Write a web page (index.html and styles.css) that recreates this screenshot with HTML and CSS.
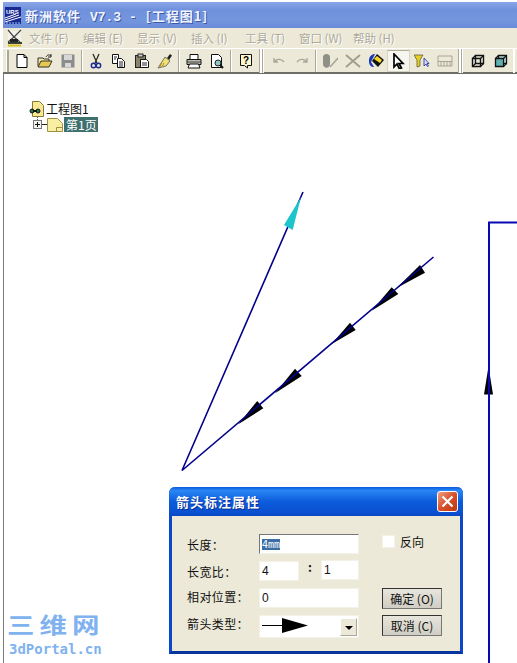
FILE: index.html
```html
<!DOCTYPE html>
<html lang="zh-CN">
<head>
  <meta charset="UTF-8">
  <title>新洲软件 V7.3</title>
  <link rel="stylesheet" href="styles.css">
</head>
<body>
  <div class="window">
    <div class="titlebar">
      <svg class="app-icon" width="16" height="17" viewBox="0 0 16 17">
        <rect width="16" height="17" fill="#1a2a90"/>
        <path d="M0 11 L11 7 M0 13 L14 8 M0 15 L16 10" stroke="#fff" stroke-width="1"/>
        <path d="M1 16h14" stroke="#9cf" stroke-dasharray="2 1"/>
        <text x="1" y="6.500" class="app-icon-text">URS</text>
      </svg>
      <span class="title-text">新洲软件 <span class="mono">V7.3 -</span> [工程图1]</span>
    </div>

    <div class="menubar">
      <svg class="menu-icon" width="16" height="19" viewBox="0 0 16 19">
        <path d="M1 2h13v11H1z" fill="#f4f2e8"/>
        <path d="M1 1 L7 8 L1 13 M14 1 L7 8 M7 8 L13 13" stroke="#444" stroke-width="1.200" fill="none"/>
        <path d="M3 10h8v3H3z" fill="#222"/>
        <path d="M1 14h14" stroke="#111" stroke-width="1.600"/>
        <path d="M1 16.500h13" stroke="#d8c020" stroke-width="2"/>
      </svg>
      <span class="menu-item">文件 (F)</span>
      <span class="menu-item">编辑 (E)</span>
      <span class="menu-item">显示 (V)</span>
      <span class="menu-item">插入 (I)</span>
      <span class="menu-item">工具 (T)</span>
      <span class="menu-item">窗口 (W)</span>
      <span class="menu-item">帮助 (H)</span>
    </div>

    <div class="toolbar">
      <span class="grip-first"></span>
      <span class="tool"><svg viewBox="0 0 16 16"><path d="M3 1.500h7l3 3v10H3z" fill="#fff" stroke="#000"/><path d="M10 1.500v3h3" fill="none" stroke="#000"/></svg></span>
      <span class="tool"><svg viewBox="0 0 16 16"><path d="M1 13V5h5l1 1h5v2" fill="#f4e8a0" stroke="#333"/><path d="M1 14l3-6h11l-3 6z" fill="#e8c850" stroke="#333"/><path d="M9 4c1-2 3-3 5-1M14 1v3h-3" fill="none" stroke="#222"/></svg></span>
      <span class="tool"><svg viewBox="0 0 16 16"><rect x="1.500" y="1.500" width="13" height="13" fill="#8c8c8c"/><rect x="4" y="2" width="8" height="5" fill="#d8d8d8"/><rect x="5" y="10" width="6" height="4" fill="#d8d8d8"/></svg></span>
      <span class="sep"></span>
      <span class="tool"><svg viewBox="0 0 16 16"><path d="M5 1l4 9M11 1L7 10" stroke="#222" stroke-width="1.200"/><circle cx="5.500" cy="12.500" r="2.200" fill="none" stroke="#1a2a90" stroke-width="1.400"/><circle cx="10.500" cy="12.500" r="2.200" fill="none" stroke="#1a2a90" stroke-width="1.400"/></svg></span>
      <span class="tool"><svg viewBox="0 0 16 16"><path d="M1.500 1.500h6v9h-6z" fill="#fff" stroke="#111"/><path d="M6.500 5.500h4l3 3v6h-7z" fill="#fff" stroke="#111"/><path d="M3 4h3M3 6h2M8 9h4M8 11h4M8 13h4" stroke="#223"/></svg></span>
      <span class="tool"><svg viewBox="0 0 16 16"><rect x="1.500" y="2.500" width="10" height="12" fill="#8a8468" stroke="#222"/><rect x="4" y="1" width="5" height="3" fill="#ccc" stroke="#222"/><path d="M6.500 6.500h6l2 2v6h-8z" fill="#fff" stroke="#111"/><path d="M8 10h5M8 12h5" stroke="#223"/></svg></span>
      <span class="tool"><svg viewBox="0 0 16 16"><path d="M10 5l3-4 2 1.500-3 4.500z" fill="#222"/><path d="M8 4l5 4-4 5-8 2z" fill="#f2e070" stroke="#555" stroke-width=".8"/><path d="M5 9l-2 5M7 10l-2 4" stroke="#a89030"/></svg></span>
      <span class="sep sep-wide"></span>
      <span class="tool"><svg viewBox="0 0 16 16"><path d="M4 6V1.500h8V6" fill="#fff" stroke="#111"/><path d="M1 6.500h14l0 5H1z" fill="#bdbdb0" stroke="#111"/><path d="M3.500 11h9l1.500 4H2z" fill="#fff" stroke="#111"/><path d="M1 9h14" stroke="#444"/></svg></span>
      <span class="tool"><svg viewBox="0 0 16 16"><path d="M2.500 1.500h7l3 3v10h-10z" fill="#fff" stroke="#111"/><circle cx="9" cy="10" r="3" fill="#8cc8c8" stroke="#222"/><path d="M11 12l3 3" stroke="#111" stroke-width="2"/></svg></span>
      <span class="sep sep-wide"></span>
      <span class="tool"><svg viewBox="0 0 16 16"><path d="M2.500 1.500h11v11h-4v2.500l-3-2.500h-4z" fill="#fff8d0" stroke="#111"/><text x="5" y="11" class="help-mark">?</text></svg></span>
      <span class="grip"></span>
      <span class="tool"><svg viewBox="0 0 16 16"><path d="M3 5v4h4M3 9c2-3 7-4 10 0" fill="none" stroke="#a8a498" stroke-width="1.300"/></svg></span>
      <span class="tool"><svg viewBox="0 0 16 16"><path d="M13 5v4H9M13 9C11 6 6 5 3 9" fill="none" stroke="#a8a498" stroke-width="1.300"/></svg></span>
      <span class="sep"></span>
      <span class="tool"><svg viewBox="0 0 16 16"><path d="M1 4c0-4 7-4 7 0v7c0 5-7 5-7 0z" fill="#8f8f88"/><path d="M8 14L16 5" stroke="#a8a498" stroke-width="1.500"/></svg></span>
      <span class="tool"><svg viewBox="0 0 16 16"><path d="M1 2l14 12M15 2L1 14" stroke="#a09c90" stroke-width="1.800"/></svg></span>
      <span class="tool"><svg viewBox="0 0 16 16"><path d="M1 8C1 3 4 1 7 1L3 9l3 5C3 14 1 12 1 8z" fill="#1838b8"/><path d="M9 1l7 6-6 7-6-6z" fill="#111"/><path d="M9 3l5 4-2 3-6-4z" fill="#f2d828"/></svg></span>
      <span class="tool tool-on"><svg viewBox="0 0 16 16"><path d="M3 1v13l3-3 2.500 5 2-1-2.500-4.500h4z" fill="#fff" stroke="#000" stroke-width="1.700"/></svg></span>
      <span class="tool"><svg viewBox="0 0 16 16"><path d="M0 2h9L6 7v6L3 14V7z" fill="#e8d020" stroke="#333" stroke-width=".6"/><path d="M10 5v8l2-2 1.500 2.500 1-.5-1.500-2.500h2z" fill="#d8e0ff" stroke="#1a2a90" stroke-width=".8"/></svg></span>
      <span class="tool"><svg viewBox="0 0 16 16"><path d="M1 3h14M1 13h14M1 8.500h14" stroke="#a8a498"/><path d="M1 3v10M15 3v10M4 8.500V13M7 8.500V13M10 8.500V13M13 8.500V13" stroke="#a8a498" fill="none"/></svg></span>
      <span class="grip"></span>
      <span class="tool"><svg viewBox="0 0 16 16"><path d="M5.500 2.500h8v8h-8zM2.500 5.500h8v8h-8z" fill="none" stroke="#111" stroke-width="1.400"/><path d="M2.500 5.500l3-3M10.500 5.500l3-3M10.500 13.500l3-3M2.500 13.500l3-3" stroke="#111" stroke-width="1.200"/></svg></span>
      <span class="tool"><svg viewBox="0 0 16 16"><path d="M5.500 2.500h8v8h-8z" fill="#b8d8d8" stroke="#111" stroke-width="1.300"/><path d="M2.500 5.500h8v8h-8z" fill="#60b0b0" stroke="#111" stroke-width="1.300"/><path d="M2.500 5.500l3-3M10.500 5.500l3-3M10.500 13.500l3-3" stroke="#111" stroke-width="1.200"/></svg></span>
      <span class="bar-end"></span>
    </div>

    <div class="canvas">
      <div class="tree">
        <div class="tree-row">
          <svg class="tree-root-icon" width="15" height="16" viewBox="0 0 15 16">
            <path d="M3.500 .5h7l4 4v11h-11z" fill="#f8e898" stroke="#8a7a30"/>
            <circle cx="3" cy="10" r="2" fill="#208040" stroke="#111"/>
            <circle cx="9" cy="10" r="2" fill="#208040" stroke="#111"/>
            <path d="M4 10h4" stroke="#111" stroke-width="2"/>
          </svg>
          <span class="tree-label">工程图1</span>
        </div>
        <div class="tree-row tree-child">
          <span class="tree-plus"></span>
          <span class="tree-dash"></span>
          <svg width="16" height="14" viewBox="0 0 16 14">
            <path d="M.5 .5h10l5 5v8H.5z" fill="#f8f0a0" stroke="#a09048"/>
            <path d="M9.500 9.500h6M9.500 9.500v4" stroke="#a09048"/>
          </svg>
          <span class="tree-label tree-selected">第1页</span>
        </div>
      </div>

      <svg class="drawing" viewBox="0 74 517 589" width="517" height="589">
        <g class="arrow-black">
          <path d="M396.700 288 L420 265 L425 272.700 Z"/>
          <path d="M371.700 310.700 L391.700 287.300 L398.300 294 Z"/>
          <path d="M331.700 344 L350 322.700 L355.700 330 Z"/>
          <path d="M275 393.300 L295 368.700 L301.700 376 Z"/>
          <path d="M238.300 424.300 L257.300 401 L263.300 408.300 Z"/>
          <path d="M488.500 366.500 L484 394.500 L493 394.500 Z"/>
        </g>
        <path class="line" d="M303 192 L182 470.500 L433.500 257"/>
        <path class="line line-thick" d="M517 222.500 H489 V663"/>
        <path class="arrow-cyan" d="M301 197 L284 225 L292.700 230 Z"/>
      </svg>

      <div class="watermark">
        <div class="wm-cn">三维网</div>
        <div class="wm-en">3dPortal.cn</div>
      </div>

      <div class="dialog">
        <div class="dialog-title">
          <span>箭头标注属性</span>
          <span class="dialog-close">
            <svg width="13" height="13" viewBox="0 0 13 13"><path d="M1.500 1.500l10 10M11.500 1.500l-10 10" stroke="#fff" stroke-width="2.200"/></svg>
          </span>
        </div>
        <div class="dialog-body">
          <span class="field-label">长度：</span>
          <div class="input input-focus"><span class="selected">4mm</span></div>
          <label class="check"><span class="check-box"></span>反向</label>

          <span class="field-label">长宽比：</span>
          <div class="ratio">
            <div class="input">4</div>
            <span class="ratio-colon">:</span>
            <div class="input input-raised">1</div>
          </div>
          <span></span>

          <span class="field-label label-up">相对位置：</span>
          <div class="input">0</div>
          <button class="btn">确定 (O)</button>

          <span class="field-label label-up">箭头类型：</span>
          <div class="input combo">
            <svg width="62" height="15" viewBox="0 0 62 15"><path d="M0 7.500h24" stroke="#000"/><path d="M20 0L46 7.500 20 15z" fill="#000"/></svg>
            <span class="combo-btn"></span>
          </div>
          <button class="btn">取消 (C)</button>
        </div>
      </div>
    </div>
  </div>
</body>
</html>
```

FILE: styles.css
```css
/* Basic Reset */
* {
  margin: 0;
  padding: 0;
  box-sizing: border-box;
}
body {
  font-family: "Noto Sans CJK SC", "Liberation Sans", sans-serif;
  font-size: 12px;
  background: #fff;
  color: #111;
  overflow: hidden;
}
.window {
  width: 517px;
  height: 663px;
  padding: 2px 0 0 3px;
  display: flex;
  flex-direction: column;
  overflow: hidden;
}

/* title bar */
.titlebar {
  height: 26px;
  flex: none;
  display: flex;
  align-items: center;
  gap: 4px;
  padding-left: 2px;
  background: linear-gradient(#8aa6e6, #6f90dc 30%, #7496de 70%, #6a8cd8);
}
.app-icon-text {
  font: bold 6px "Liberation Sans", sans-serif;
  fill: #fff;
}
.title-text {
  font-size: 13px;
  font-weight: bold;
  letter-spacing: 1px;
  word-spacing: 5px;
  color: #f2f4ff;
  text-shadow: 1px 1px 0 #3c5aa8;
  white-space: pre;
}
.mono {
  font-family: "Liberation Mono", monospace;
  letter-spacing: 0;
  word-spacing: 0;
}

/* menu */
.menubar {
  height: 20px;
  flex: none;
  display: flex;
  align-items: center;
  padding-left: 4px;
  background: #ece9d8;
}
.menu-icon {
  margin-right: 6px;
}
.menu-item {
  width: 54px;
  flex: none;
  font-size: 11.5px;
  color: #aca899;
  text-shadow: 1px 1px 0 #fff;
  white-space: nowrap;
}

/* toolbar */
.toolbar {
  height: 26px;
  flex: none;
  display: flex;
  align-items: center;
  background: #ece9d8;
  border-top: 1px solid #fff;
  border-bottom: 2px solid #6e6e66;
}
.grip-first {
  width: 3px;
  height: 22px;
  flex: none;
  margin: 0 1px 0 3px;
  background: linear-gradient(90deg, #fff 1px, #aca899 1px);
}
.tool {
  width: 23px;
  height: 22px;
  flex: none;
  display: flex;
  align-items: center;
  justify-content: center;
}
.tool svg {
  width: 16px;
  height: 16px;
}
.tool-on {
  background: #f6f5ee;
  border: 1px solid #d8d4c4;
  border-top-color: #b0ac9c;
}
.help-mark {
  font: bold 10px "Liberation Sans", sans-serif;
}
.sep {
  width: 5px;
  height: 22px;
  flex: none;
  background: linear-gradient(90deg, transparent 2px, #aca899 2px, #aca899 3px, #fff 3px, #fff 4px, transparent 4px);
}
.sep-wide {
  width: 6px;
}
.grip {
  width: 10px;
  height: 24px;
  flex: none;
  background: linear-gradient(90deg, transparent 2px, #aca899 2px, #aca899 3px, #fff 3px, #fff 5px, #aca899 5px, #aca899 6px, #fff 6px, #fff 7px, transparent 7px);
}
.bar-end {
  width: 2px;
  height: 24px;
  flex: none;
  margin-left: 1px;
  background: #fff;
}

/* drawing area */
.canvas {
  position: relative;
  flex: 1;
  padding: 26px 0 0 25px;
  background: #fff;
  border-left: 1px solid #7c7c7c;
}
.tree {
  font-size: 12px;
}
.tree-row {
  display: flex;
  align-items: center;
  height: 17px;
}
.tree-root-icon {
  margin-right: 2px;
}
.tree-child {
  height: 15px;
  margin-left: 4px;
}
.tree-plus {
  position: relative;
  width: 9px;
  height: 9px;
  flex: none;
  border: 1px solid #777;
  background: linear-gradient(#111, #111) center / 5px 1px no-repeat, linear-gradient(#111, #111) center / 1px 5px no-repeat, #f4f4ec;
}
.tree-plus::before {
  content: "";
  position: absolute;
  left: 3px;
  top: -4px;
  height: 3px;
  border-left: 1px dotted #555;
}
.tree-dash {
  width: 5px;
  height: 1px;
  flex: none;
  background: #222;
}
.tree-label {
  white-space: nowrap;
}
.tree-selected {
  margin-left: 1px;
  padding: 0 1px 0 2px;
  line-height: 15px;
  color: #fff;
  background: #3f7070;
}

.drawing {
  position: absolute;
  left: -4px;
  top: 0;
}
.line {
  fill: none;
  stroke: #00008c;
  stroke-width: 1.600;
}
.line-thick {
  stroke: #0808b0;
  stroke-width: 2;
}
.arrow-black {
  fill: #000;
}
.arrow-cyan {
  fill: #1cc4cc;
}

/* watermark */
.watermark {
  position: absolute;
  left: 3px;
  top: 533px;
  color: #80b2f0;
}
.wm-cn {
  width: 80px;
  height: 34px;
  font-size: 22px;
  font-weight: bold;
  line-height: 32px;
  letter-spacing: 4px;
  white-space: nowrap;
  transform: scaleX(1.250);
  transform-origin: left;
}
.wm-en {
  margin-left: 2px;
  font-family: "DejaVu Sans Mono", monospace;
  font-size: 14px;
  line-height: 16px;
  font-weight: bold;
}

/* dialog */
.dialog {
  position: absolute;
  left: 165px;
  top: 413px;
  width: 294px;
  height: 167px;
  background: #ece9d8;
  border: 3px solid #0a48c8;
  border-top: 0;
  border-bottom-color: #0834a0;
  border-radius: 6px 6px 0 0;
}
.dialog-title {
  height: 29px;
  margin: 0 -3px;
  padding: 0 5px 0 7px;
  display: flex;
  align-items: center;
  justify-content: space-between;
  font-size: 13px;
  font-weight: bold;
  letter-spacing: 1px;
  color: #fff;
  text-shadow: 1px 1px 0 #0a2c90;
  background: linear-gradient(#0a5ae0, #2a86f4 12%, #0c5cdc 50%, #0a50d0 90%, #0a48c0);
  border-radius: 6px 6px 0 0;
}
.dialog-close {
  width: 21px;
  height: 21px;
  display: flex;
  align-items: center;
  justify-content: center;
  background: linear-gradient(135deg, #f0a080, #d8502c 50%, #c03810);
  border: 1px solid #fff;
  border-radius: 3px;
}
.dialog-body {
  display: grid;
  grid-template-columns: 72px 100px 60px;
  grid-template-rows: 20px 20px 20px 23px;
  row-gap: 7px;
  padding: 18px 0 0 15px;
  align-items: center;
}
.dialog-body > :nth-child(3n) {
  margin-left: 23px;
  width: 60px;
}
.field-label {
  font-size: 12px;
  letter-spacing: .4px;
  white-space: nowrap;
}
.label-up {
  align-self: start;
}
.input {
  height: 20px;
  line-height: 18px;
  padding-left: 2px;
  background: #fff;
  border: 1px solid #f4f2e6;
  font-family: "Liberation Sans", sans-serif;
  font-size: 12px;
}
.input-focus {
  border-top-color: #777;
  border-left-color: #777;
}
.input-raised {
  margin-top: -2px;
}
.selected {
  font-family: "DejaVu Sans Mono", monospace;
  font-size: 10px;
  color: #fff;
  background: #3a6ea5;
}
.ratio {
  display: grid;
  grid-template-columns: 40px 22px 38px;
  align-items: center;
}
.ratio-colon {
  margin-bottom: 8px;
  line-height: 12px;
  text-align: center;
  font-weight: bold;
}
.check {
  align-self: start;
  display: flex;
  align-items: center;
  gap: 5px;
  margin-top: 1px;
  font-size: 12px;
  line-height: 13px;
  white-space: nowrap;
}
.check-box {
  width: 13px;
  height: 13px;
  background: #fff;
  border: 1px solid #f4f2e6;
}
.btn {
  align-self: start;
  height: 21px;
  font-family: inherit;
  font-size: 12px;
  color: #111;
  background: linear-gradient(#e8e6dc, #cfcdc4);
  border: 1px solid #333;
  border-right-color: #777;
  border-bottom-color: #777;
}
.combo {
  height: 23px;
  position: relative;
  display: flex;
  align-items: flex-start;
  padding-top: 2px;
}
.combo-btn {
  position: absolute;
  right: 1px;
  top: 2px;
  width: 17px;
  height: 18px;
  background: #ece9d8;
  border: 1px solid #aca899;
  border-left-color: #fff;
  border-top-color: #fff;
}
.combo-btn::after {
  content: "";
  position: absolute;
  left: 4px;
  top: 7px;
  border: 4px solid transparent;
  border-top: 4px solid #000;
  border-bottom: 0;
}
```
